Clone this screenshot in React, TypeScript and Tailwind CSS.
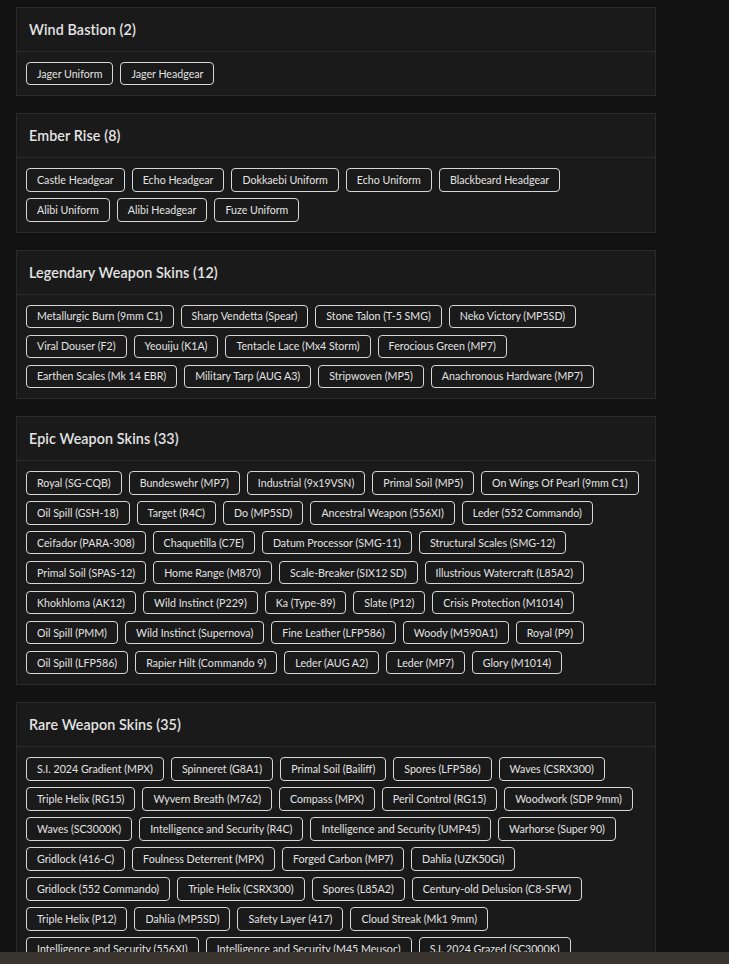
import React from "react";

type Section = {
  title: string;
  rows: string[][];
};

// rows are kept as they wrap in the 640px card
const sections: Section[] = [
  { title: "Wind Bastion", rows: [["Jager Uniform", "Jager Headgear"]] },
  {
    title: "Ember Rise",
    rows: [
      ["Castle Headgear", "Echo Headgear", "Dokkaebi Uniform", "Echo Uniform", "Blackbeard Headgear"],
      ["Alibi Uniform", "Alibi Headgear", "Fuze Uniform"],
    ],
  },
  {
    title: "Legendary Weapon Skins",
    rows: [
      ["Metallurgic Burn (9mm C1)", "Sharp Vendetta (Spear)", "Stone Talon (T-5 SMG)", "Neko Victory (MP5SD)"],
      ["Viral Douser (F2)", "Yeouiju (K1A)", "Tentacle Lace (Mx4 Storm)", "Ferocious Green (MP7)"],
      ["Earthen Scales (Mk 14 EBR)", "Military Tarp (AUG A3)", "Stripwoven (MP5)", "Anachronous Hardware (MP7)"],
    ],
  },
  {
    title: "Epic Weapon Skins",
    rows: [
      ["Royal (SG-CQB)", "Bundeswehr (MP7)", "Industrial (9x19VSN)", "Primal Soil (MP5)", "On Wings Of Pearl (9mm C1)"],
      ["Oil Spill (GSH-18)", "Target (R4C)", "Do (MP5SD)", "Ancestral Weapon (556XI)", "Leder (552 Commando)"],
      ["Ceifador (PARA-308)", "Chaquetilla (C7E)", "Datum Processor (SMG-11)", "Structural Scales (SMG-12)"],
      ["Primal Soil (SPAS-12)", "Home Range (M870)", "Scale-Breaker (SIX12 SD)", "Illustrious Watercraft (L85A2)"],
      ["Khokhloma (AK12)", "Wild Instinct (P229)", "Ka (Type-89)", "Slate (P12)", "Crisis Protection (M1014)"],
      ["Oil Spill (PMM)", "Wild Instinct (Supernova)", "Fine Leather (LFP586)", "Woody (M590A1)", "Royal (P9)"],
      ["Oil Spill (LFP586)", "Rapier Hilt (Commando 9)", "Leder (AUG A2)", "Leder (MP7)", "Glory (M1014)"],
    ],
  },
  {
    title: "Rare Weapon Skins",
    rows: [
      ["S.I. 2024 Gradient (MPX)", "Spinneret (G8A1)", "Primal Soil (Bailiff)", "Spores (LFP586)", "Waves (CSRX300)"],
      ["Triple Helix (RG15)", "Wyvern Breath (M762)", "Compass (MPX)", "Peril Control (RG15)", "Woodwork (SDP 9mm)"],
      ["Waves (SC3000K)", "Intelligence and Security (R4C)", "Intelligence and Security (UMP45)", "Warhorse (Super 90)"],
      ["Gridlock (416-C)", "Foulness Deterrent (MPX)", "Forged Carbon (MP7)", "Dahlia (UZK50GI)"],
      ["Gridlock (552 Commando)", "Triple Helix (CSRX300)", "Spores (L85A2)", "Century-old Delusion (C8-SFW)"],
      ["Triple Helix (P12)", "Dahlia (MP5SD)", "Safety Layer (417)", "Cloud Streak (Mk1 9mm)"],
      ["Intelligence and Security (556XI)", "Intelligence and Security (M45 Meusoc)", "S.I. 2024 Grazed (SC3000K)"],
      ["Candy Stripes (M12)", "Ranger Camo (F90)", "Oil Spill (C75 Auto)", "Tiger Lily (SR-25)"],
      ["Bitter Chill (AR-15.50)", "Trooper (Bearing 9)"],
    ],
  },
];

const SectionCard = ({ section }: { section: Section }) => {
  const count = section.rows.reduce((n, r) => n + r.length, 0);
  return (
    <div className="w-[640px] bg-[#1a1a1a] border border-[#2a2a2a] mb-[17px]">
      <div className="h-[44px] flex items-center px-3 border-b border-[#2a2a2a]">
        <h3 className="text-[14.3px] font-semibold text-[#e4e4e4] tracking-[0.1px]">
          {section.title} ({count})
        </h3>
      </div>
      <div className="flex flex-col gap-[6.6px] px-[9px] py-[10px]">
        {section.rows.map((row, i) => (
          <div key={i} className="flex gap-[7px]">
            {row.map((item) => (
              <span
                key={item}
                className="h-[23.4px] flex items-center border border-[#d6d6d6] rounded-[4px] px-[10px] text-[10.65px] text-[#e2e2e2] whitespace-nowrap"
              >
                {item}
              </span>
            ))}
          </div>
        ))}
      </div>
    </div>
  );
};

export default function App() {
  return (
    <div
      className="min-h-screen bg-[#121212] pt-[7px] pl-4"
      style={{ fontFamily: "Lato, sans-serif" }}
    >
      {sections.map((s) => (
        <SectionCard key={s.title} section={s} />
      ))}
      <div className="fixed bottom-0 left-0 right-0 h-[12px] bg-[#3a352f]" />
    </div>
  );
}
